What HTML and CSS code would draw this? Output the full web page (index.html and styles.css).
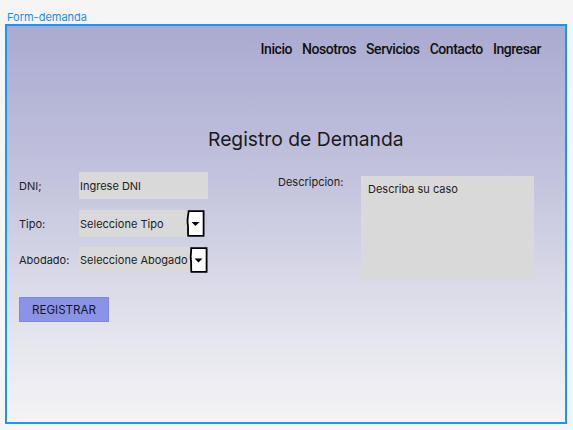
FILE: index.html
```html
<!DOCTYPE html>
<html lang="es">
<head>
<meta charset="utf-8">
<title>Form-demanda</title>
<link rel="stylesheet" href="styles.css">
</head>
<body>
<div class="caption">Form-demanda</div>
<div class="frame">
  <nav class="nav">
    <a>Inicio</a>
    <a>Nosotros</a>
    <a>Servicios</a>
    <a>Contacto</a>
    <a>Ingresar</a>
  </nav>
  <h1 class="title">Registro de Demanda</h1>
  <div class="form">
    <div class="col-left">
      <div class="row row-dni">
        <span class="label">DNI;</span>
        <span class="input">Ingrese DNI</span>
      </div>
      <div class="row row-tipo">
        <span class="label">Tipo:</span>
        <span class="select">
          <span class="select-text">Seleccione Tipo</span>
          <svg class="arrow" width="19" height="27" viewBox="0 0 19 27"><path d="M2.6 1.2 H17.6 V25.8 H2.2 C1.6 21 2.6 17 1.6 13 C1.2 8 2.4 5 2.6 1.2 Z" fill="#fff" stroke="#000" stroke-width="1.8"/><path d="M5.5 12 H13.5 L9.5 16 Z" fill="#000"/></svg>
        </span>
      </div>
      <div class="row row-abog">
        <span class="label">Abodado:</span>
        <span class="select">
          <span class="select-text">Seleccione Abogado</span>
          <svg class="arrow" width="19" height="26" viewBox="0 0 19 26"><path d="M2.2 1.2 H17.6 V24.8 H2.4 C1.8 20 2.6 16 1.8 12 C1.4 8 2.4 5 2.2 1.2 Z" fill="#fff" stroke="#000" stroke-width="1.8"/><path d="M5.5 11.5 H13.5 L9.5 15.5 Z" fill="#000"/></svg>
        </span>
      </div>
    </div>
    <div class="col-right">
      <span class="label">Descripcion:</span>
      <div class="textarea">Describa su caso</div>
    </div>
  </div>
  <button class="btn">REGISTRAR</button>
</div>
</body>
</html>
```
FILE: styles.css
```css
* { box-sizing: border-box; }
html, body { margin: 0; padding: 0; }
body {
  background: #f5f5f5;
  font-family: Inter, "Noto Sans", sans-serif;
  width: 573px;
  height: 430px;
  overflow: hidden;
}
.caption {
  height: 24px;
  padding: 11px 0 0 7px;
  font-size: 11px;
  line-height: 13px;
  color: #1b8cf5;
}
.frame {
  margin-left: 5px;
  width: 562px;
  height: 400px;
  border: 2px solid #1896ff;
  background: linear-gradient(to bottom, #a9aad0 0%, #c4c4de 40%, #e2e2ec 75%, #f4f4f6 100%);
  display: flex;
  flex-direction: column;
}
.nav {
  display: flex;
  justify-content: flex-end;
  gap: 10px;
  padding: 15px 24px 0 0;
  font-family: Roboto, "Liberation Sans", sans-serif;
  font-weight: 500;
  font-size: 14px;
  line-height: 17px;
  color: #111;
  letter-spacing: -0.45px;
}
.title {
  margin: 70px 0 0 201px;
  font-size: 19.3px;
  line-height: 23px;
  font-weight: 400;
  color: #1a1a1a;
}
.form {
  display: flex;
  align-items: flex-start;
  margin-top: 21px;
  padding-left: 12px;
  font-size: 11px;
  color: #222;
}
.col-left {
  display: flex;
  flex-direction: column;
  width: 259px;
}
.row {
  display: flex;
  align-items: center;
}
.row-tipo { margin-top: 11px; }
.row-abog { margin-top: 10px; }
.label {
  width: 60px;
  flex: none;
}
.input {
  width: 129px;
  height: 27px;
  background: #d9d9d9;
  display: flex;
  align-items: center;
  padding-left: 1px;
}
.select {
  display: flex;
  align-items: center;
  height: 26px;
}
.row-tipo .select { height: 27px; }
.select-text {
  width: 109px;
  height: 100%;
  background: #d9d9d9;
  display: flex;
  align-items: center;
  padding-left: 1px;
  white-space: nowrap;
}
.arrow {
  margin-left: -2px;
  flex: none;
}
.row-abog .select-text { width: 111px; }
.row-abog .arrow { margin-left: -1px; }
.col-right {
  display: flex;
  align-items: flex-start;
  margin-top: 4px;
}
.col-right .label {
  width: 83px;
  line-height: 13px;
}
.textarea {
  width: 173px;
  height: 104px;
  background: #d9d9d9;
  padding: 7px 7px;
  line-height: 13px;
}
.btn {
  margin: 17px 0 0 12px;
  width: 90px;
  height: 25px;
  background: #8b93e7;
  border: 1px solid #7d87e6;
  font-family: Inter, "Noto Sans", sans-serif;
  font-size: 11.6px;
  color: #15152a;
  padding: 0;
}
```
